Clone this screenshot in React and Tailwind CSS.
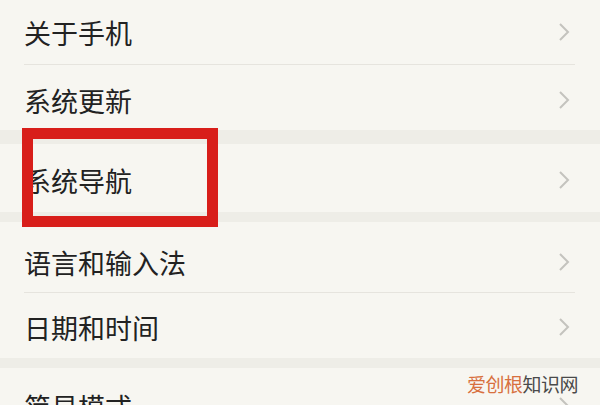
import React from "react";

const font = { fontFamily: '"Noto Sans CJK SC", "Noto Sans", sans-serif' };

const Chevron = () => (
  <svg width="12" height="20" viewBox="0 0 12 20" className="shrink-0">
    <polyline points="2,2 10,10 2,18" fill="none" stroke="#c4c3be" strokeWidth="2" />
  </svg>
);

const Row = ({ label, h, divider, pt = "pt-0" }) => (
  <div className="pl-6 pr-[25px]">
    <div className={`flex items-center justify-between pr-[5px] ${h} ${pt} ${divider ? "border-b border-[#e6e4de]" : ""}`}>
      <span className="text-[27px] leading-none text-[#222222]">{label}</span>
      <Chevron />
    </div>
  </div>
);

const Band = ({ h }) => <div className={`${h} bg-[#eeede7]`} />;

export default function App() {
  return (
    <div className="relative w-[600px] h-[405px] overflow-hidden bg-[#f7f6f1]" style={font}>
      <Row label="关于手机" h="h-[65px]" divider />
      <Row label="系统更新" h="h-[65px]" pt="pt-[5px]" />
      <Band h="h-[14px]" />
      <Row label="系统导航" h="h-[68px]" pt="pt-[4px]" />
      <Band h="h-[10px]" />
      <Row label="语言和输入法" h="h-[71px]" pt="pt-[10px]" divider />
      <Row label="日期和时间" h="h-[65px]" pt="pt-[3px]" />
      <Band h="h-[10px]" />
      <Row label="简易模式" h="h-[70px]" pt="pt-[6px]" />

      {/* red highlight box */}
      <div className="absolute left-[22px] top-[128px] w-[196px] h-[99px] border-[11px] border-[#d81e1a]" />

      {/* watermark */}
      <div className="absolute left-[467px] top-[374px] text-[19px] leading-none tracking-[-0.5px]">
        <span className="text-[#d8703f]">爱创根</span>
        <span className="text-[#4a4a4a]">知识网</span>
      </div>
    </div>
  );
}
